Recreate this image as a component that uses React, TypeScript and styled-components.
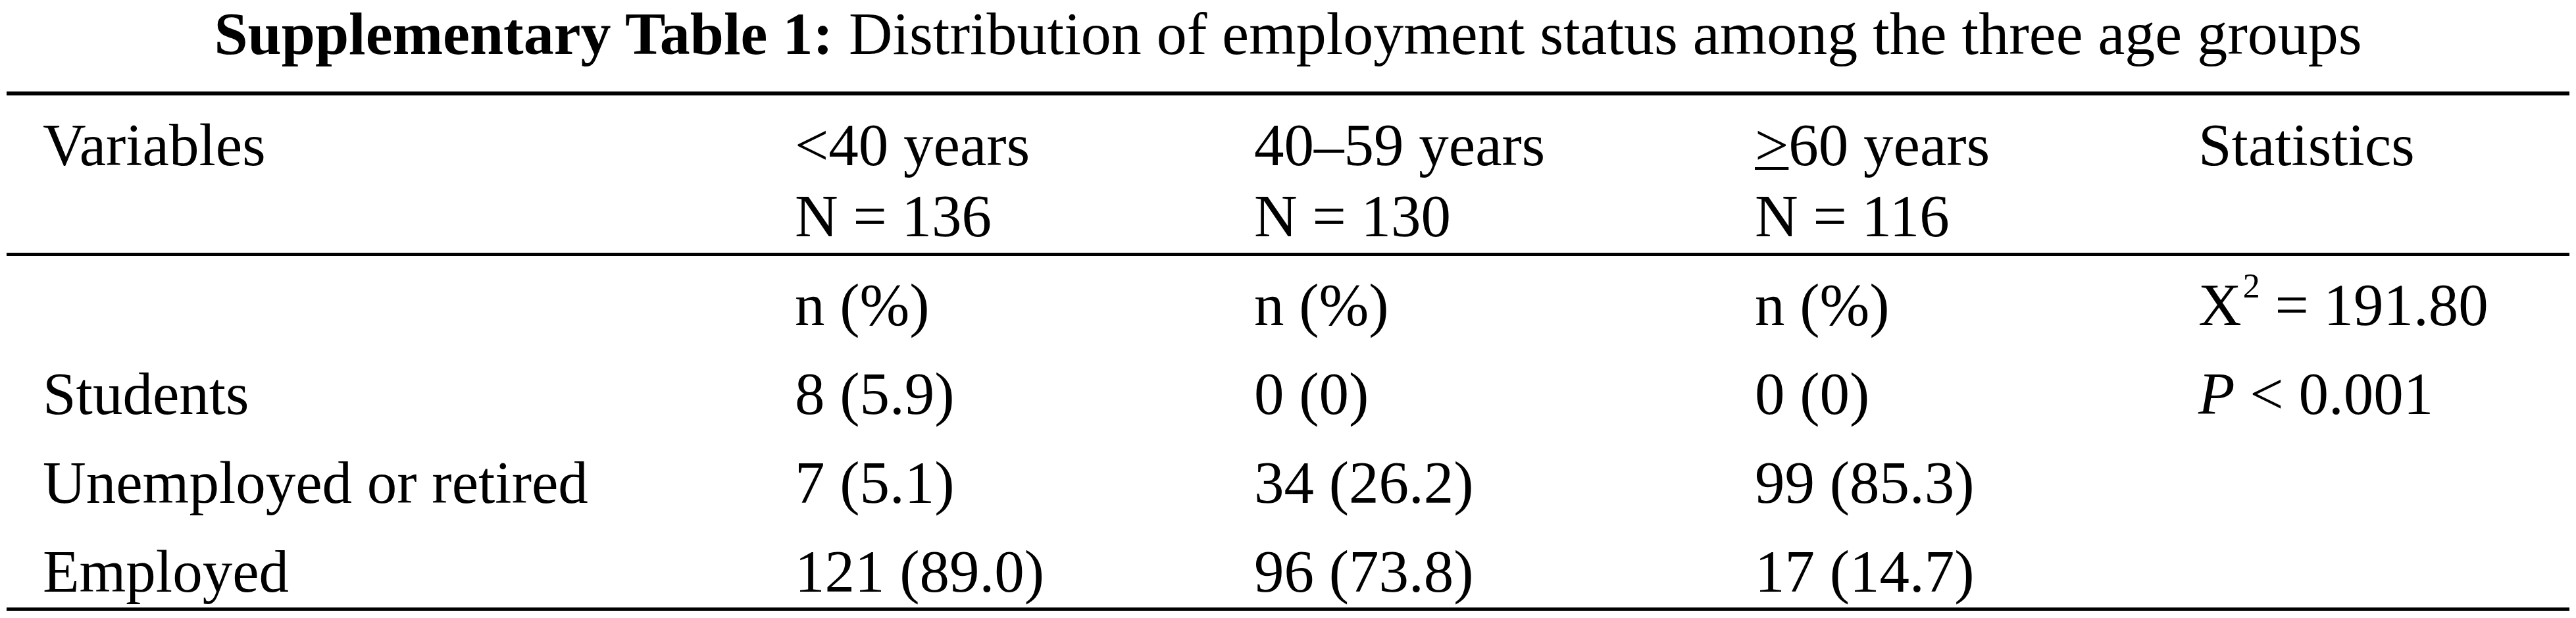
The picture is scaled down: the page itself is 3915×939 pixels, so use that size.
import styled, { createGlobalStyle } from 'styled-components';
import React from 'react';

const GlobalStyle = createGlobalStyle`
  html, body {
    margin: 0;
    padding: 0;
    background: #fff;
  }
  body {
    font-family: "Liberation Serif", "Times New Roman", serif;
    color: #000;
  }
`;

const Page = styled.div`
  width: 3915px;
  box-sizing: border-box;
  padding: 0 10px;
`;

const Caption = styled.div`
  font-size: 92px;
  line-height: 102px;
  text-align: center;
  white-space: nowrap;
`;

const CaptionLabel = styled.span`
  font-weight: bold;
  margin-right: 24px;
`;

const Table = styled.div`
  margin-top: 37px;
  font-size: 91px;
  line-height: 108px;
`;

const HeadRow = styled.div`
  display: grid;
  grid-template-columns: 1143px 698px 761px 674px 1fr;
  padding: 22px 0 1px 55px;
  border-top: 6px solid #000;
  border-bottom: 5px solid #000;
`;

const TableBody = styled.div`
  display: flex;
  flex-direction: column;
  gap: 27px;
  padding-top: 21px;
  border-bottom: 5px solid #000;
`;

const BodyRow = styled.div`
  display: grid;
  grid-template-columns: 1143px 698px 761px 674px 1fr;
  padding-left: 55px;
  height: 108px;
`;

const Cell = styled.div`
  white-space: nowrap;
`;

const Sup = styled.span`
  display: inline-block;
  font-size: 52px;
  line-height: 0;
  vertical-align: 42px;
  margin-left: 2px;
`;

const Italic = styled.i`
  font-style: italic;
`;

const Under = styled.span`
  text-decoration: underline;
  text-decoration-thickness: 4px;
  text-underline-offset: 3px;
`;

type Row = {
  label: string;
  values: string[];
  stat?: React.ReactNode;
};

const rows: Row[] = [
  {
    label: '',
    values: ['n (%)', 'n (%)', 'n (%)'],
    stat: (
      <>
        X<Sup>2</Sup> = 191.80
      </>
    ),
  },
  {
    label: 'Students',
    values: ['8 (5.9)', '0 (0)', '0 (0)'],
    stat: (
      <>
        <Italic>P</Italic> &lt; 0.001
      </>
    ),
  },
  { label: 'Unemployed or retired', values: ['7 (5.1)', '34 (26.2)', '99 (85.3)'] },
  { label: 'Employed', values: ['121 (89.0)', '96 (73.8)', '17 (14.7)'] },
];

const App = () => {
  return (
    <Page>
      <GlobalStyle />
      <Caption>
        <CaptionLabel>Supplementary Table 1:</CaptionLabel>
        Distribution of employment status among the three age groups
      </Caption>

      <Table>
        <HeadRow>
          <Cell>Variables</Cell>
          <Cell>
            &lt;40 years
            <br />N = 136
          </Cell>
          <Cell>
            40–59 years
            <br />N = 130
          </Cell>
          <Cell>
            <Under>&gt;</Under>60 years
            <br />N = 116
          </Cell>
          <Cell>Statistics</Cell>
        </HeadRow>

        <TableBody>
          {rows.map((row, i) => (
            <BodyRow key={i}>
              <Cell>{row.label}</Cell>
              {row.values.map((v, j) => (
                <Cell key={j}>{v}</Cell>
              ))}
              <Cell>{row.stat}</Cell>
            </BodyRow>
          ))}
        </TableBody>
      </Table>
    </Page>
  );
};

export default App;
